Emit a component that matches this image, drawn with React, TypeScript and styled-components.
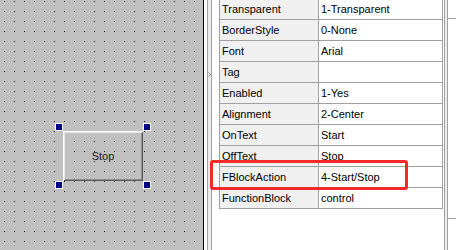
import React from "react";
import styled, { createGlobalStyle } from "styled-components";

const GlobalStyle = createGlobalStyle`
  html, body {
    margin: 0;
    padding: 0;
    background: #fff;
  }
  body {
    width: 456px;
    height: 250px;
    overflow: hidden;
    font-family: "Liberation Sans", Arial, sans-serif;
    font-size: 11px;
    color: #000;
  }
`;

const Screen = styled.div`
  position: relative;
  display: flex;
  width: 456px;
  height: 250px;
  overflow: hidden;
  background: #fff;
`;

// design surface with the 10px dot grid
const DesignCanvas = styled.div`
  position: relative;
  flex: none;
  width: 203px;
  background-color: #c0c0c0;
  background-image: conic-gradient(from 270deg at 1px 1px, #000 25%, transparent 0);
  background-size: 10px 10px;
  background-position: 4px 1px;
`;

const ToggleWidget = styled.div`
  position: absolute;
  left: 63px;
  top: 131px;
  width: 80px;
  height: 50px;
  box-sizing: border-box;
  box-shadow: inset 1px 1px #fff, inset -1px -1px #5a5a5a,
    inset 2px 2px #e6e6e6, inset -2px -2px #8c8c8c;
  display: flex;
  align-items: center;
  justify-content: center;
  font-size: 11px;
  color: #1a1a1a;
`;

const Handle = styled.div<{ $x: number; $y: number }>`
  position: absolute;
  left: ${(p) => p.$x}px;
  top: ${(p) => p.$y}px;
  width: 8px;
  height: 8px;
  box-sizing: border-box;
  border: 1px solid #fff;
  background: #000080;
`;

const Divider = styled.div`
  flex: none;
  display: flex;
  width: 16px;
  box-sizing: border-box;
  border-left: 1px solid #000;
  padding-left: 3px;
  background: #fff;
`;

const Splitter = styled.div<{ $inner: number }>`
  flex: none;
  display: flex;
  flex-direction: column;
  align-items: center;
  width: ${(p) => p.$inner}px;
  border-left: 1px solid #a0a0a0;
  border-right: 1px solid #a0a0a0;
  background: #ececec;
`;

const Chevron = styled.svg`
  margin-top: 72px;
`;

const PropertyPanel = styled.div`
  flex: 1;
  display: flex;
  align-items: flex-start;
`;

const PropGrid = styled.div`
  flex: none;
  width: 224px;
  margin-top: -1px;
  box-sizing: border-box;
  border-left: 1px solid #a0a0a0;
  border-right: 1px solid #a0a0a0;
`;

const PropRow = styled.div`
  display: flex;
  height: 21px;
  box-sizing: border-box;
  border-bottom: 1px solid #a0a0a0;
`;

const Cell = styled.div<{ $label?: boolean }>`
  box-sizing: border-box;
  width: ${(p) => (p.$label ? "99px" : "123px")};
  padding-left: 2px;
  line-height: 20px;
  white-space: nowrap;
  overflow: hidden;
  background: ${(p) => (p.$label ? "#f0f0f0" : "#fff")};
  border-right: ${(p) => (p.$label ? "1px solid #a0a0a0" : "none")};
`;

const RightEdge = styled.div`
  flex: none;
  display: flex;
  align-self: stretch;
  padding-left: 1px;
`;

const NextPanel = styled.div`
  flex: 1;
  padding-top: 18px;
`;

const NextSection = styled.div`
  height: 199px;
  border-top: 1px solid #a0a0a0;
`;

const Highlight = styled.div`
  position: absolute;
  left: 210px;
  top: 160px;
  width: 198px;
  height: 30px;
  box-sizing: border-box;
  border: 3px solid #f42a2a;
  border-radius: 3px;
`;

const props: [string, string][] = [
  ["Transparent", "1-Transparent"],
  ["BorderStyle", "0-None"],
  ["Font", "Arial"],
  ["Tag", ""],
  ["Enabled", "1-Yes"],
  ["Alignment", "2-Center"],
  ["OnText", "Start"],
  ["OffText", "Stop"],
  ["FBlockAction", "4-Start/Stop"],
  ["FunctionBlock", "control"],
];

const App = () => {
  return (
    <Screen>
      <GlobalStyle />
      <DesignCanvas>
        <ToggleWidget>Stop</ToggleWidget>
        <Handle $x={55} $y={123} />
        <Handle $x={143} $y={123} />
        <Handle $x={55} $y={181} />
        <Handle $x={143} $y={181} />
      </DesignCanvas>
      <Divider>
        <Splitter $inner={3}>
          <Chevron width="3" height="5" viewBox="0 0 3 5">
            <path d="M0.5 0.5 L2.5 2.5 L0.5 4.5" fill="none" stroke="#808080" strokeWidth="1" />
          </Chevron>
        </Splitter>
      </Divider>
      <PropertyPanel>
        <PropGrid>
          {props.map(([name, value]) => (
            <PropRow key={name}>
              <Cell $label>{name}</Cell>
              <Cell>{value}</Cell>
            </PropRow>
          ))}
        </PropGrid>
        <RightEdge>
          <Splitter $inner={2} />
        </RightEdge>
        <NextPanel>
          <NextSection />
          <NextSection />
        </NextPanel>
      </PropertyPanel>
      <Highlight />
    </Screen>
  );
};

export default App;
